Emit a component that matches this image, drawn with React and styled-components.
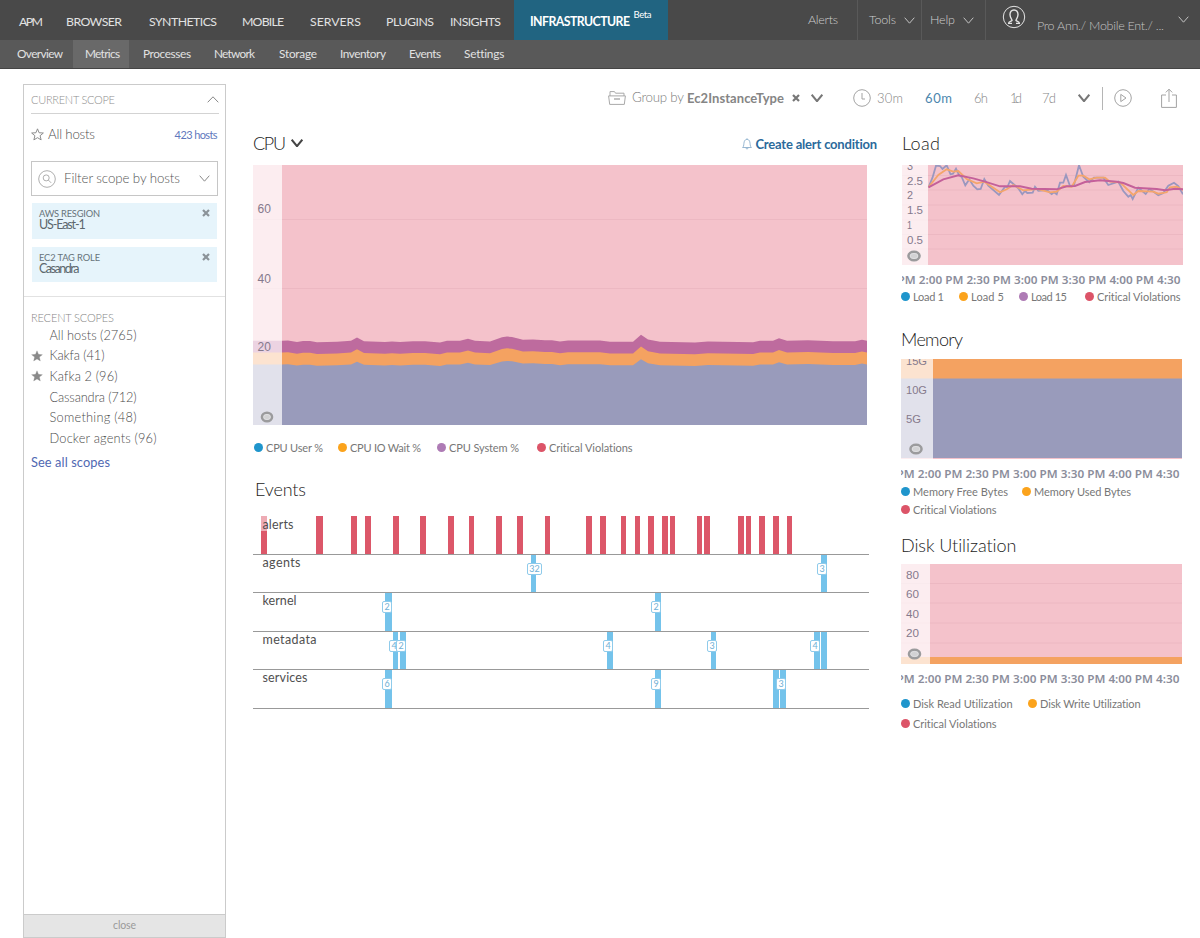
import React, { useLayoutEffect, useRef, useState } from "react";
import styled, { createGlobalStyle } from "styled-components";

const GlobalStyle = createGlobalStyle`
  * {
    box-sizing: border-box;
  }

  body {
    margin: 0;
    background: #fff;
    font-family: Lato, "Noto Sans", sans-serif;
    font-weight: 400;
    overflow: hidden;
  }
`;

const colors = {
  pink: "#f4c2cb",
  purple: "#be6b9e",
  orange: "#f4a261",
  slate: "#999bbb",
  blueDot: "#1f95cc",
  orangeDot: "#fba31c",
  purpleDot: "#ae7bb5",
  redDot: "#dc5468",
};

const CopyText = styled.span`
  display: inline-block;
  flex: none;
  white-space: nowrap;
  font-size: ${(p) => p.$size || 12}px;
  font-weight: ${(p) => p.$weight || 400};
  color: ${(p) => p.$color || "inherit"};
  line-height: 1;
`;

// Tracks the letters in or out so that a label takes the given width.
function Copy({ width, size, weight, color, children }) {
  const ref = useRef(null);
  const [spacing, setSpacing] = useState(0);

  useLayoutEffect(() => {
    if (!width) return;
    const node = ref.current;
    node.style.letterSpacing = "0px";
    const natural = node.getBoundingClientRect().width;
    setSpacing((width - natural) / Math.max(1, String(children).length - 1));
  }, [width, children]);

  return (
    <CopyText
      ref={ref}
      $size={size}
      $weight={weight}
      $color={color}
      style={{ letterSpacing: `${spacing}px` }}
    >
      {children}
    </CopyText>
  );
}

/* ---------- icons ---------- */

function Chevron({ w = 10, h = 6, stroke = 1, color = "#bbb", up }) {
  const d = up
    ? `M.7 ${h - 0.7} L${w / 2} .8 L${w - 0.7} ${h - 0.7}`
    : `M.7 .7 L${w / 2} ${h - 0.8} L${w - 0.7} .7`;
  return (
    <svg width={w} height={h} viewBox={`0 0 ${w} ${h}`}>
      <path d={d} fill="none" stroke={color} strokeWidth={stroke} />
    </svg>
  );
}

function Cross({ size = 8, color = "#8b9399", stroke = 2.2 }) {
  return (
    <svg width={size} height={size} viewBox="0 0 8 8">
      <path d="M1 1 L7 7 M7 1 L1 7" stroke={color} strokeWidth={stroke} />
    </svg>
  );
}

function Star({ size = 13, filled }) {
  return (
    <svg width={size} height={size} viewBox="0 0 14 14">
      <path
        d="M7 .9 L8.7 5.1 L13.3 5.4 L9.8 8.3 L10.9 12.8 L7 10.4 L3.1 12.8 L4.2 8.3 L.7 5.4 L5.3 5.1 Z"
        fill={filled ? "#8a8a8a" : "none"}
        stroke="#858585"
        strokeWidth={filled ? 0.3 : 1}
      />
    </svg>
  );
}

function Avatar() {
  return (
    <svg width="24" height="24" viewBox="0 0 24 24" fill="none" stroke="#e4e4e4">
      <circle cx="12" cy="12" r="10.7" strokeWidth="1" />
      <path
        d="M6.8 18.2 C6.6 16.4 9 16.6 10 15.6 C10.4 14.6 8.2 13.4 8 9.8 C7.9 6.8 9.5 5 12 5 C14.5 5 16.1 6.8 16 9.8 C15.8 13.4 13.6 14.6 14 15.6 C15 16.6 17.4 16.4 17.2 18.2"
        strokeWidth="1.4"
      />
      <path d="M6 18.4 H10 M14 18.4 H18" strokeWidth="1.3" />
    </svg>
  );
}

function Folder() {
  return (
    <svg width="18" height="14" viewBox="0 0 18 14" fill="none" stroke="#a9a9a9">
      <path d="M2 5 V.6 H6.5 L7.5 2.2 H16 V5" />
      <path d="M.6 4.9 H17.4 L16.3 13.4 H1.7 Z" />
      <path d="M6 8 H12" strokeWidth="1.4" />
    </svg>
  );
}

function Clock() {
  return (
    <svg width="18" height="18" viewBox="0 0 18 18" fill="none" stroke="#a3a3a3">
      <circle cx="9" cy="9" r="8.3" />
      <path d="M9 4 V10 H12" />
    </svg>
  );
}

function Play() {
  return (
    <svg width="18" height="18" viewBox="0 0 18 18" fill="none" stroke="#a3a3a3">
      <circle cx="9" cy="9" r="8.3" />
      <path d="M6.8 5.4 L12 9 L6.8 12.6 Z" />
    </svg>
  );
}

function Share() {
  return (
    <svg width="16" height="21" viewBox="0 0 16 21" fill="none" stroke="#a3a3a3">
      <path d="M5 7 H.6 V19.4 H15.4 V7 H11 M8 14 V1.2 M4.8 4.4 L8 1.2 L11.2 4.4" />
    </svg>
  );
}

function Bell() {
  return (
    <svg width="10" height="12" viewBox="0 0 10 12" fill="none" stroke="#7fa6c6" strokeWidth=".8">
      <path d="M.6 9.5 C2.1 8.4 1.7 5.5 2.2 3.8 C2.6 2.1 3.8 1.4 5 1.4 C6.2 1.4 7.4 2.1 7.8 3.8 C8.3 5.5 7.9 8.4 9.4 9.5 Z" />
      <path d="M4 9.8 C4 11.5 6 11.5 6 9.8 M5 .3 V1.4" />
    </svg>
  );
}

function SearchBadge() {
  return (
    <svg width="18" height="18" viewBox="0 0 18 18" fill="none" stroke="#a5a5a5">
      <circle cx="9" cy="9" r="8.3" strokeWidth=".9" />
      <circle cx="8.2" cy="7.9" r="3" strokeWidth=".9" />
      <path d="M10.4 10.1 L13.2 12.9" strokeWidth=".9" />
    </svg>
  );
}

/* ---------- header ---------- */

const TopBar = styled.header`
  display: flex;
  height: 40px;
  background: #494949;
  color: #e2e2e2;
`;

const TopItem = styled.div`
  width: ${(p) => p.$w}px;
  padding-top: 16px;
  padding-left: ${(p) => p.$left || 0}px;
  line-height: 0;
`;

const ProductTab = styled.div`
  display: flex;
  width: 154px;
  padding: 16px 0 0 16px;
  gap: 4px;
  background: #216481;
  color: #fff;

  sup {
    margin-top: -6px;
    line-height: 0;
  }
`;

const Utility = styled.div`
  display: flex;
  align-items: flex-start;
  width: ${(p) => p.$w}px;
  padding: 14px 0 0 ${(p) => p.$left}px;
  border-right: 1px solid #595959;
  color: #cfcfcf;

  svg {
    margin: 3px 0 0 8px;
  }
`;

const Account = styled.div`
  display: flex;
  flex: 1;
  padding: 5px 11px 0 16px;
  color: #c4c4c4;

  > span {
    margin: 15px 0 0 11px;
  }

  > svg:last-child {
    margin: 11px 0 0 auto;
  }
`;

const SubBar = styled.nav`
  display: flex;
  height: 29px;
  background: #595959;
  border-bottom: 1px solid #444;
  color: #e2e2e2;
`;

const SubItem = styled.div`
  width: ${(p) => p.$w}px;
  padding: 8px 0 0 ${(p) => p.$left || 0}px;
  line-height: 0;
  background: ${(p) => (p.$active ? "#696969" : "transparent")};
`;

/* ---------- page ---------- */

const Page = styled.div`
  width: 1200px;
  height: 938px;
  overflow: hidden;
`;

const Body = styled.div`
  display: flex;
  height: 869px;
  padding: 15px 0 0 23px;
`;

const Sidebar = styled.aside`
  display: flex;
  flex-direction: column;
  width: 203px;
  height: 854px;
  border: 1px solid #cbcbcb;
`;

const ScopeHeader = styled.div`
  display: flex;
  align-items: center;
  justify-content: space-between;
  height: 29px;
  margin: 0 6px 0 7px;
  border-bottom: 1px solid #d3d3d3;
`;

const HostRow = styled.div`
  display: flex;
  align-items: center;
  height: 41px;
  padding: 0 8px 0 7px;

  > svg {
    margin-right: 4px;
  }

  > span:last-child {
    margin-left: auto;
  }
`;

const Filter = styled.div`
  display: flex;
  align-items: center;
  height: 35px;
  margin: 6px 7px 7px;
  padding: 0 7px 0 6px;
  border: 1px solid #c6c6c6;

  > span {
    margin-left: 8px;
  }

  > svg:last-child {
    margin-left: auto;
  }
`;

const Tag = styled.div`
  display: flex;
  justify-content: space-between;
  height: ${(p) => p.$h}px;
  margin: 0 8px 8px 8px;
  padding: 6px 7px 0 7px;
  background: #e6f4fb;
`;

const TagCopy = styled.div`
  display: flex;
  flex-direction: column;
  gap: 1px;
`;

const Recent = styled.div`
  flex: 1;
  margin-top: 6px;
  padding: 15px 7px 0;
  border-top: 1px solid #e2e2e2;
`;

const ScopeRow = styled.div`
  display: flex;
  align-items: center;
  height: 20.6px;
`;

const StarSlot = styled.div`
  width: 18.5px;
  line-height: 0;
`;

const SectionLabel = styled.div`
  height: 13px;
  line-height: 0;
`;

const SeeAll = styled.div`
  margin-top: 2px;
`;

const CloseBar = styled.div`
  display: flex;
  align-items: center;
  justify-content: center;
  height: 23px;
  padding-bottom: 2px;
  background: #e5e5e5;
  border-top: 1px solid #cbcbcb;
`;

const Content = styled.main`
  width: 947px;
  margin-left: 27px;
`;

const Toolbar = styled.div`
  display: flex;
  align-items: center;
  height: 28px;
  margin-bottom: 1px;
  padding-left: 355px;
`;

const Slot = styled.div`
  display: flex;
  align-items: center;
  flex: none;
  width: ${(p) => p.$w}px;
`;

const Divider = styled.div`
  width: 1px;
  height: 23px;
  margin-right: 11px;
  background: #b5b5b5;
`;

const Columns = styled.div`
  display: flex;
`;

const MainColumn = styled.section`
  width: 648px;
`;

const SideColumn = styled.section`
  width: 299px;
`;

const ChartHead = styled.div`
  display: flex;
  align-items: center;
  height: ${(p) => p.$h || 52}px;
  padding-top: ${(p) => p.$top || 8}px;
  padding-left: ${(p) => p.$left || 0}px;

  > svg {
    margin-left: 6px;
  }
`;

const AlertLink = styled.div`
  display: flex;
  align-items: center;
  gap: 3px;
  margin: 2px 24px 0 auto;
`;

const ChartSvg = styled.svg`
  display: block;
  margin-left: ${(p) => p.$left || 0}px;
`;

const AxisText = styled.text`
  font-family: "Liberation Sans", Arial, sans-serif;
  font-size: ${(p) => p.$size || 11}px;
  fill: #85798c;
`;

const TimeText = styled.text`
  font-family: "Noto Sans", sans-serif;
  font-size: 11px;
  font-weight: 600;
  fill: #8b8d9b;
`;

const Legend = styled.div`
  display: flex;
  flex-wrap: wrap;
  padding-left: ${(p) => p.$left || 0}px;
`;

const LegendItem = styled.div`
  display: flex;
  align-items: center;
  gap: 3px;
  width: ${(p) => p.$w}px;
  height: ${(p) => p.$h || 18}px;
`;

const Dot = styled.i`
  width: 9px;
  height: 9px;
  border-radius: 50%;
  background: ${(p) => p.$color};
`;

const Gap = styled.div`
  height: ${(p) => p.$h}px;
`;

/* ---------- event lanes ---------- */

const Lane = styled.div`
  position: relative;
  width: 616px;
  height: 38.5px;
  padding: 2px 0 0 9.5px;
  border-bottom: 1px solid #999;
  line-height: 0;
`;

const LaneLabel = styled.div`
  position: relative;
  z-index: 1;
  width: 34px;
  height: 15px;
  margin-top: ${(p) => (p.$raised ? -2 : 0)}px;
  padding-top: ${(p) => (p.$raised ? 3 : 0)}px;

  &::before {
    content: "";
    position: absolute;
    z-index: -1;
    inset: 0 0 0 -2px;
    background: ${(p) => (p.$raised ? "rgba(255, 255, 255, 0.5)" : "none")};
  }
`;

// Bars sit on the time scale of the lane.
const Mark = styled.div`
  position: absolute;
  top: 0;
  bottom: 0;
  background: ${(p) => (p.$alert ? "#dc5769" : "#74c3eb")};
`;

const Count = styled.div`
  position: absolute;
  top: 8px;
  height: 12px;
  border: 1px solid #8fcbeb;
  border-radius: 2px;
  background: #fff;
  color: #6fb0d6;
  font-size: 9px;
  line-height: 10px;
  text-align: center;
`;

/* ---------- data ---------- */

const topItems = [
  ["APM", 47, 24],
  ["BROWSER", 83, 56],
  ["SYNTHETICS", 93, 68],
  ["MOBILE", 68, 42],
  ["SERVERS", 76, 51],
  ["PLUGINS", 64, 48],
  ["INSIGHTS", 64, 51],
];

const subItems = [
  ["Overview", 56, 46, 0],
  ["Metrics", 56, 35, 12],
  ["Processes", 85, 48, 14],
  ["Network", 65, 41, 0],
  ["Storage", 61, 38, 0],
  ["Inventory", 69, 46, 0],
  ["Events", 55, 32, 0],
  ["Settings", 60, 40, 0],
];

const recentScopes = [
  ["All hosts (2765)", 87, false],
  ["Kakfa (41)", 55, true],
  ["Kafka 2 (96)", 68, true],
  ["Cassandra (712)", 87, false],
  ["Something (48)", 87, false],
  ["Docker agents (96)", 107, false],
];

const cpuRipple = [
  [0, -1], [29, -1], [35, -1.2], [44, 0.3], [50, -0.7], [57, -0.7], [64, 0.5], [84, 0],
  [98, -1], [104, -4.3], [111, -0.6], [132, 0.3], [139, -0.3], [147, 0.3], [160, -0.6],
  [172, -0.6], [187, 0.8], [194, -1], [207, -1], [215, -3], [222, -1], [237, -0.3],
  [249, -4.5], [254, -5.2], [259, -4.8], [270, -2], [280, -2.3], [292, -1.5], [299, -1.5],
  [307, -0.2], [315, -1.3], [347, -1.3], [357, 0], [380, 0], [388, -7], [395, -2.3],
  [407, 0], [442, 0.7], [455, -0.3], [500, 0.5], [507, -1], [520, -1], [526, -3.5],
  [534, -1], [555, -1.5], [580, -0.5], [602, -0.5], [609, -2], [614, -1],
];

const load1 =
  "26.5,22.3 30.5,12.7 34,.7 38,1 40.5,4 44.7,.3 48.5,9.3 51,8.7 54,3.7 57,10 59.7,12 63.3,20.3 67.3,14.3 71.3,20.7 75.3,24.3 78.7,24 82.3,14 86.3,20.7 97,30 103,21.7 105.3,22.3 108,16 116.3,23.3 120.3,29.3 123,26 125.3,28 130.7,27.7 133,21.7 136.3,25.7 144.7,25 149.7,29 152,27.3 154.7,29.3 158,17.7 161.3,17.7 164,10 168,21 172,20 177,.3 181.3,11.7 187.3,17.3 192,12.7 201.3,12.7 206.3,20 216.3,16.7 221.3,26 226.3,31.7 228.7,30 230.7,34 236.3,22.7 243.7,29 247.3,24 253,27.7 256.3,30.3 261.3,28 266.3,20.7 272,17.7 276.3,21 281,29.3";
const load5 =
  "26.5,22.3 36.3,10 44.7,4.3 51.3,6.7 56.3,6 64.7,14 74.7,18.3 82.3,16.7 98,27.3 104.7,24.3 111.3,20 121.3,25.3 134.7,24 148,27.3 154.7,26.7 161.3,21 169.7,21.7 176.3,10.7 181.3,10.7 187.3,14.3 194.7,12.7 203,12.7 208,16.7 218,17.3 231.3,30 236.3,26 251.3,26.7 256.3,28.7 264.7,27.3 268,22.3 274.7,21.7 281,25";
const load15 =
  "26.5,22.3 41.3,14.3 56.3,10.3 71.3,13.3 83,16.7 98,21.3 118,21.3 129.7,23.7 154.7,24.3 164.7,21.3 173,21 183,17 198,15.3 214.7,16.7 221.3,18 233,22.7 254.7,24 263,25.3 273,23.7 281,24.3";

const alertMarks = [
  [8, 6], [63, 6.5], [98, 6], [112, 5.5], [140, 5.5], [167, 5.5], [195, 5.5], [216, 5],
  [243, 6], [264, 6], [292, 5.3], [333, 5.5], [347, 5.5], [368, 5], [382, 5], [395, 6],
  [409, 6], [417, 5], [444, 5], [450.5, 6], [485, 6], [492.5, 5.5], [506, 6], [519.5, 6.5],
  [534, 5],
];

const lanes = [
  { name: "alerts", width: 31, marks: alertMarks, alert: true },
  { name: "agents", width: 38, marks: [[278, 5, "32", 274, 15], [568, 6, "3", 564, 10]] },
  { name: "kernel", width: 34, marks: [[132, 6.5, "2", 129, 10], [402, 6, "2", 398, 10]] },
  {
    name: "metadata",
    width: 54,
    marks: [
      [140, 5, "4", 136, 10],
      [146.7, 6, "2", 143, 10],
      [353.7, 6, "4", 350, 10],
      [457.7, 5, "3", 454, 10],
      [561, 6, "4", 557, 10],
      [568, 6],
    ],
  },
  {
    name: "services",
    width: 45,
    marks: [
      [132, 6.5, "6", 129, 10],
      [402, 6, "9", 398, 10],
      [519.5, 6.5],
      [527, 6, "3", 523, 10],
    ],
  },
];

/* ---------- charts ---------- */

function Ring({ x, y, rx = 5 }) {
  return (
    <g>
      <ellipse cx={x} cy={y} rx={rx} ry="4.2" fill="#d2d2d4" stroke="#9b9b9d" strokeWidth="2.6" />
      <ellipse cx={x} cy={y} rx={rx - 1.6} ry="2.6" fill="none" stroke="#e2e2e4" strokeWidth=".8" />
    </g>
  );
}

function area(base) {
  const edge = cpuRipple.map(([x, dy]) => `${x},${base + dy * (base > 190 ? 0.85 : 1)}`);
  return `0,260 ${edge.join(" ")} 614,260`;
}

function CpuChart() {
  return (
    <ChartSvg width="614" height="260">
      <rect width="614" height="260" fill={colors.pink} />
      <path d="M0 54.5 H614 M0 123.5 H614" stroke="#ecb8c2" strokeWidth="1" />
      <polygon points={area(176.8)} fill={colors.purple} />
      <polygon points={area(188.5)} fill={colors.orange} />
      <polygon points={area(200.3)} fill={colors.slate} />
      <rect width="29" height="260" fill="#fff" opacity=".7" />
      {[["60", 48], ["40", 117.5], ["20", 186]].map(([label, y]) => (
        <AxisText key={label} x="4.5" y={y} $size={12}>
          {label}
        </AxisText>
      ))}
      <Ring x={14} y={252} />
    </ChartSvg>
  );
}

function TimeAxis({ left }) {
  return (
    <ChartSvg width="281" height="14" $left={left}>
      <TimeText x="-4.5" y="11" textLength="283" lengthAdjust="spacingAndGlyphs">
        PM 2:00 PM 2:30 PM 3:00 PM 3:30 PM 4:00 PM 4:30
      </TimeText>
    </ChartSvg>
  );
}

function SmallChart({ left, strip, labels, ring, lines, children }) {
  return (
    <ChartSvg width="281" height="100" $left={left}>
      <rect width="281" height="100" fill={colors.pink} />
      {lines.map((y) => (
        <path key={y} d={`M0 ${y} H281`} stroke="#ecb8c2" strokeWidth="1" />
      ))}
      {children}
      <rect width={strip} height="100" fill="#fff" opacity=".7" />
      {labels.map(([label, y, w]) => (
        <AxisText key={label} x="5" y={y} textLength={w} lengthAdjust="spacingAndGlyphs">
          {label}
        </AxisText>
      ))}
      <Ring x={ring[0]} y={ring[1]} rx={5.5} />
    </ChartSvg>
  );
}

function LegendList({ items, left, height, size = 11 }) {
  return (
    <Legend $left={left}>
      {items.map(([label, color, slot, width]) => (
        <LegendItem key={label} $w={slot} $h={height}>
          <Dot $color={color} />
          <Copy size={size} width={width} color="#777">
            {label}
          </Copy>
        </LegendItem>
      ))}
    </Legend>
  );
}

function Header() {
  return (
    <>
      <TopBar>
        {topItems.map(([label, slot, width], i) => (
          <TopItem key={label} $w={slot + (i === 0 ? 19 : 0)} $left={i === 0 ? 19 : 0}>
            <Copy size={12.3} width={width}>
              {label}
            </Copy>
          </TopItem>
        ))}
        <ProductTab>
          <Copy size={12.3} width={100} weight={700}>
            INFRASTRUCTURE
          </Copy>
          <sup>
            <Copy size={9.5} width={18}>
              Beta
            </Copy>
          </sup>
        </ProductTab>
        <Utility $w={190} $left={140}>
          <Copy size={12.5} width={30} weight={300}>
            Alerts
          </Copy>
        </Utility>
        <Utility $w={64} $left={11}>
          <Copy size={12.5} width={27} weight={300}>
            Tools
          </Copy>
          <Chevron w={11} h={7} color="#c4c4c4" />
        </Utility>
        <Utility $w={64} $left={8}>
          <Copy size={12.5} width={25} weight={300}>
            Help
          </Copy>
          <Chevron w={11} h={7} color="#c4c4c4" />
        </Utility>
        <Account>
          <Avatar />
          <Copy size={12.5} width={127} weight={300}>
            Pro Ann./ Mobile Ent./ ...
          </Copy>
          <Chevron w={11} h={7} color="#c4c4c4" />
        </Account>
      </TopBar>
      <SubBar>
        {subItems.map(([label, slot, width, left], i) => (
          <SubItem
            key={label}
            $w={slot + (i === 0 ? 17 : 0)}
            $left={i === 0 ? 17 : left}
            $active={label === "Metrics"}
          >
            <Copy size={11.8} width={width}>
              {label}
            </Copy>
          </SubItem>
        ))}
      </SubBar>
    </>
  );
}

function ScopePanel() {
  return (
    <Sidebar>
      <ScopeHeader>
        <Copy size={11} width={84} weight={300} color="#8e8e8e">
          CURRENT SCOPE
        </Copy>
        <Chevron w={12} h={7} color="#888" up />
      </ScopeHeader>
      <HostRow>
        <Star size={13} />
        <Copy size={13.3} width={47} weight={300} color="#4e4e4e">
          All hosts
        </Copy>
        <Copy size={11} width={43} color="#5f78bd">
          423 hosts
        </Copy>
      </HostRow>
      <Filter>
        <SearchBadge />
        <Copy size={13.3} width={116} weight={300} color="#555">
          Filter scope by hosts
        </Copy>
        <Chevron w={11} h={7} color="#888" />
      </Filter>
      <Tag $h={36}>
        <TagCopy>
          <Copy size={9.3} width={61} color="#66737a">
            AWS RESGION
          </Copy>
          <Copy size={12.5} width={54} color="#5c676d">
            US-East-1
          </Copy>
        </TagCopy>
        <Cross />
      </Tag>
      <Tag $h={35}>
        <TagCopy>
          <Copy size={9.3} width={61} color="#66737a">
            EC2 TAG ROLE
          </Copy>
          <Copy size={12.5} width={52} color="#5c676d">
            Casandra
          </Copy>
        </TagCopy>
        <Cross />
      </Tag>
      <Recent>
        <SectionLabel>
          <Copy size={11} width={83} weight={300} color="#868686">
            RECENT SCOPES
          </Copy>
        </SectionLabel>
        {recentScopes.map(([label, width, starred]) => (
          <ScopeRow key={label}>
            <StarSlot>{starred && <Star size={12} filled />}</StarSlot>
            <Copy size={12.8} width={width} weight={300} color="#4c4c4c">
              {label}
            </Copy>
          </ScopeRow>
        ))}
        <SeeAll>
          <Copy size={12.8} width={79} color="#5068b2">
            See all scopes
          </Copy>
        </SeeAll>
      </Recent>
      <CloseBar>
        <Copy size={10.5} width={23} color="#9a9a9a">
          close
        </Copy>
      </CloseBar>
    </Sidebar>
  );
}

function TimeToolbar() {
  return (
    <Toolbar>
      <Slot $w={24}>
        <Folder />
      </Slot>
      <Slot $w={55}>
        <Copy size={13.3} width={52} weight={300} color="#7c7c7c">
          Group by
        </Copy>
      </Slot>
      <Slot $w={105}>
        <Copy size={13} width={97} weight={700} color="#858585">
          Ec2InstanceType
        </Copy>
      </Slot>
      <Slot $w={19}>
        <Cross color="#777" />
      </Slot>
      <Slot $w={42}>
        <Chevron w={12} h={8} color="#777" stroke={2} />
      </Slot>
      <Slot $w={24}>
        <Clock />
      </Slot>
      <Slot $w={48}>
        <Copy size={13} width={26} weight={300} color="#858585">
          30m
        </Copy>
      </Slot>
      <Slot $w={49}>
        <Copy size={13} width={27} color="#4b86ad">
          60m
        </Copy>
      </Slot>
      <Slot $w={36}>
        <Copy size={13} width={14} weight={300} color="#858585">
          6h
        </Copy>
      </Slot>
      <Slot $w={32}>
        <Copy size={13} width={12} weight={300} color="#858585">
          1d
        </Copy>
      </Slot>
      <Slot $w={36}>
        <Copy size={13} width={14} weight={300} color="#858585">
          7d
        </Copy>
      </Slot>
      <Slot $w={24}>
        <Chevron w={12} h={8} color="#777" stroke={2} />
      </Slot>
      <Divider />
      <Slot $w={47}>
        <Play />
      </Slot>
      <Share />
    </Toolbar>
  );
}

function EventLanes() {
  return (
    <>
      {lanes.map(({ name, width, marks, alert }) => (
        <Lane key={name}>
          {marks.map(([x, w]) => (
            <Mark key={x} $alert={alert} style={{ left: x, width: w }} />
          ))}
          {marks
            .filter((mark) => mark[2])
            .map(([x, , count, left, w]) => (
              <Count key={x} style={{ left, width: w }}>
                {count}
              </Count>
            ))}
          <LaneLabel $raised={alert}>
            <Copy size={12.5} width={width} color="#4f4f4f">
              {name}
            </Copy>
          </LaneLabel>
        </Lane>
      ))}
    </>
  );
}

function Title({ width, children }) {
  return (
    <Copy size={18} width={width} weight={300} color="#222">
      {children}
    </Copy>
  );
}

function App() {
  return (
    <Page>
      <GlobalStyle />
      <Header />
      <Body>
        <ScopePanel />
        <Content>
          <TimeToolbar />
          <Columns>
            <MainColumn>
              <ChartHead $h={52}>
                <Title width={33}>CPU</Title>
                <Chevron w={12} h={8} color="#444" stroke={2} />
                <AlertLink>
                  <Bell />
                  <Copy size={13} width={122} weight={700} color="#2b6a9b">
                    Create alert condition
                  </Copy>
                </AlertLink>
              </ChartHead>
              <CpuChart />
              <Gap $h={13} />
              <LegendList
                left={1}
                items={[
                  ["CPU User %", colors.blueDot, 84, 57],
                  ["CPU IO Wait %", colors.orangeDot, 99, 71],
                  ["CPU System %", colors.purpleDot, 100, 70],
                  ["Critical Violations", colors.redDot, 110, 84],
                ]}
              />
              <ChartHead $h={60} $top={5} $left={2}>
                <Title width={51}>Events</Title>
              </ChartHead>
              <EventLanes />
            </MainColumn>
            <SideColumn>
              <ChartHead $h={52} $left={1}>
                <Title width={38}>Load</Title>
              </ChartHead>
              <SmallChart
                left={1}
                strip={26}
                ring={[12, 91]}
                lines={[10.5, 25, 40, 55, 69.5, 84]}
                labels={[
                  ["3", 5, 6],
                  ["2.5", 20, 16],
                  ["2", 34, 6],
                  ["1.5", 49, 16],
                  ["1", 64, 5],
                  ["0.5", 78.5, 16],
                ]}
              >
                <polyline points={load1} fill="none" stroke="#9a97bf" strokeWidth="1.8" />
                <polyline points={load5} fill="none" stroke="#f4a56b" strokeWidth="1.8" />
                <polyline points={load15} fill="none" stroke="#c4609a" strokeWidth="1.9" />
              </SmallChart>
              <Gap $h={8} />
              <TimeAxis left={1} />
              <LegendList
                items={[
                  ["Load 1", colors.blueDot, 58, 31],
                  ["Load 5", colors.orangeDot, 60, 33],
                  ["Load 15", colors.purpleDot, 66, 36],
                  ["Critical Violations", colors.redDot, 100, 84],
                ]}
              />
              <ChartHead $h={54} $top={14}>
                <Title width={62}>Memory</Title>
              </ChartHead>
              <SmallChart
                strip={32}
                ring={[15, 90]}
                lines={[]}
                labels={[
                  ["15G", 6, 21],
                  ["10G", 35, 21],
                  ["5G", 64, 15],
                ]}
              >
                <rect width="281" height="20" fill={colors.orange} />
                <rect y="19.5" width="281" height="79.5" fill={colors.slate} />
              </SmallChart>
              <Gap $h={8} />
              <TimeAxis />
              <Gap $h={1} />
              <LegendList
                items={[
                  ["Memory Free Bytes", colors.blueDot, 121, 95],
                  ["Memory Used Bytes", colors.orangeDot, 130, 97],
                  ["Critical Violations", colors.redDot, 110, 84],
                ]}
              />
              <ChartHead $h={46} $top={8}>
                <Title width={116}>Disk Utilization</Title>
              </ChartHead>
              <SmallChart
                strip={29}
                ring={[13.5, 90]}
                lines={[19.5, 39, 59, 79]}
                labels={[
                  ["80", 14.5, 13],
                  ["60", 34, 13],
                  ["40", 54, 13],
                  ["20", 73, 13],
                ]}
              >
                <rect y="93" width="281" height="7" fill={colors.orange} />
              </SmallChart>
              <Gap $h={8} />
              <TimeAxis />
              <Gap $h={7} />
              <LegendList
                height={20.5}
                items={[
                  ["Disk Read Utilization", colors.blueDot, 127, 100],
                  ["Disk Write Utilization", colors.orangeDot, 130, 101],
                  ["Critical Violations", colors.redDot, 110, 84],
                ]}
              />
            </SideColumn>
          </Columns>
        </Content>
      </Body>
    </Page>
  );
}

export default App;
